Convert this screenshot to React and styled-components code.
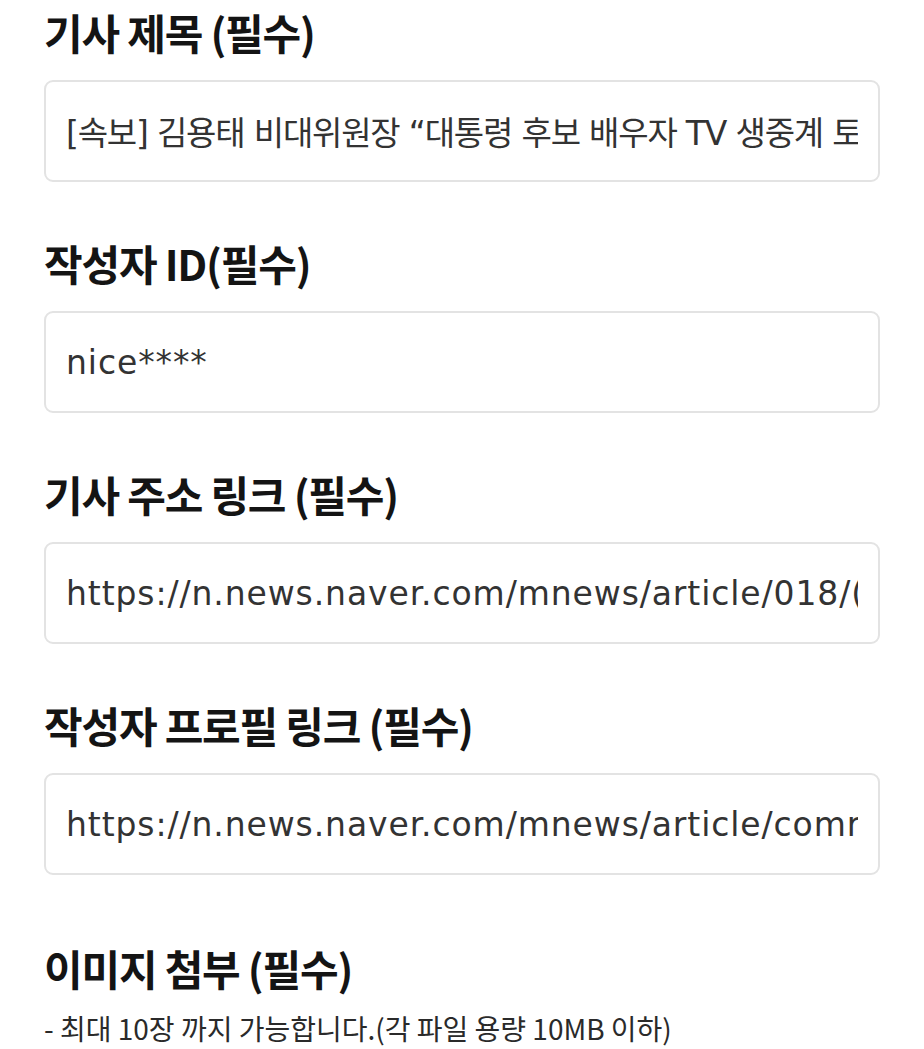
import React from "react";
import styled, { createGlobalStyle } from "styled-components";

const Global = createGlobalStyle`
  html, body { margin: 0; padding: 0; background: #fff; }
  body { font-family: "Noto Sans CJK KR", "Noto Sans", sans-serif; }
`;

const Page = styled.div`
  padding: 7px 44px 0 44px;
  display: flex;
  flex-direction: column;
`;

const Field = styled.div`
  display: flex;
  flex-direction: column;
  margin-bottom: ${(p) => (p.$last ? "68px" : "56px")};
`;

const Label = styled.div`
  font-family: "Noto Sans CJK KR", sans-serif;
  font-weight: 700;
  font-size: 42px;
  letter-spacing: -1.2px;
  line-height: 50px;
  height: 50px;
  color: #141414;
  white-space: nowrap;
`;

const Input = styled.div`
  box-sizing: border-box;
  height: 102px;
  margin-top: 23px;
  border: 2px solid #e3e3e3;
  border-radius: 9px;
  padding: 0 20px;
  display: flex;
  align-items: center;
  overflow: hidden;
`;

const Value = styled.span`
  font-family: "DejaVu Sans", "Noto Sans CJK KR", sans-serif;
  font-size: 33px;
  color: #333;
  white-space: nowrap;
  overflow: hidden;
  letter-spacing: ${(p) => (p.$korean ? "-1.2px" : "0.9px")};
  flex: 1;
  min-width: 0;
`;

const Section = styled.div`
  display: flex;
  flex-direction: column;
`;

const Note = styled.div`
  font-family: "Noto Sans CJK KR", sans-serif;
  font-size: 28px;
  line-height: 40px;
  color: #2a2a2a;
  margin-top: 15px;
  white-space: nowrap;
`;

const fields = [
  { label: "기사 제목 (필수)", value: "[속보] 김용태 비대위원장 “대통령 후보 배우자 TV 생중계 토", korean: true },
  { label: "작성자 ID(필수)", value: "nice****" },
  { label: "기사 주소 링크 (필수)", value: "https://n.news.naver.com/mnews/article/018/(" },
  { label: "작성자 프로필 링크 (필수)", value: "https://n.news.naver.com/mnews/article/comr" },
];

export default function App() {
  return (
    <>
      <Global />
      <Page>
        {fields.map((f, i) => (
          <Field key={i} $last={i === fields.length - 1}>
            <Label>{f.label}</Label>
            <Input>
              <Value $korean={f.korean}>{f.value}</Value>
            </Input>
          </Field>
        ))}
        <Section>
          <Label>이미지 첨부 (필수)</Label>
          <Note>- 최대 10장 까지 가능합니다.(각 파일 용량 10MB 이하)</Note>
        </Section>
      </Page>
    </>
  );
}
